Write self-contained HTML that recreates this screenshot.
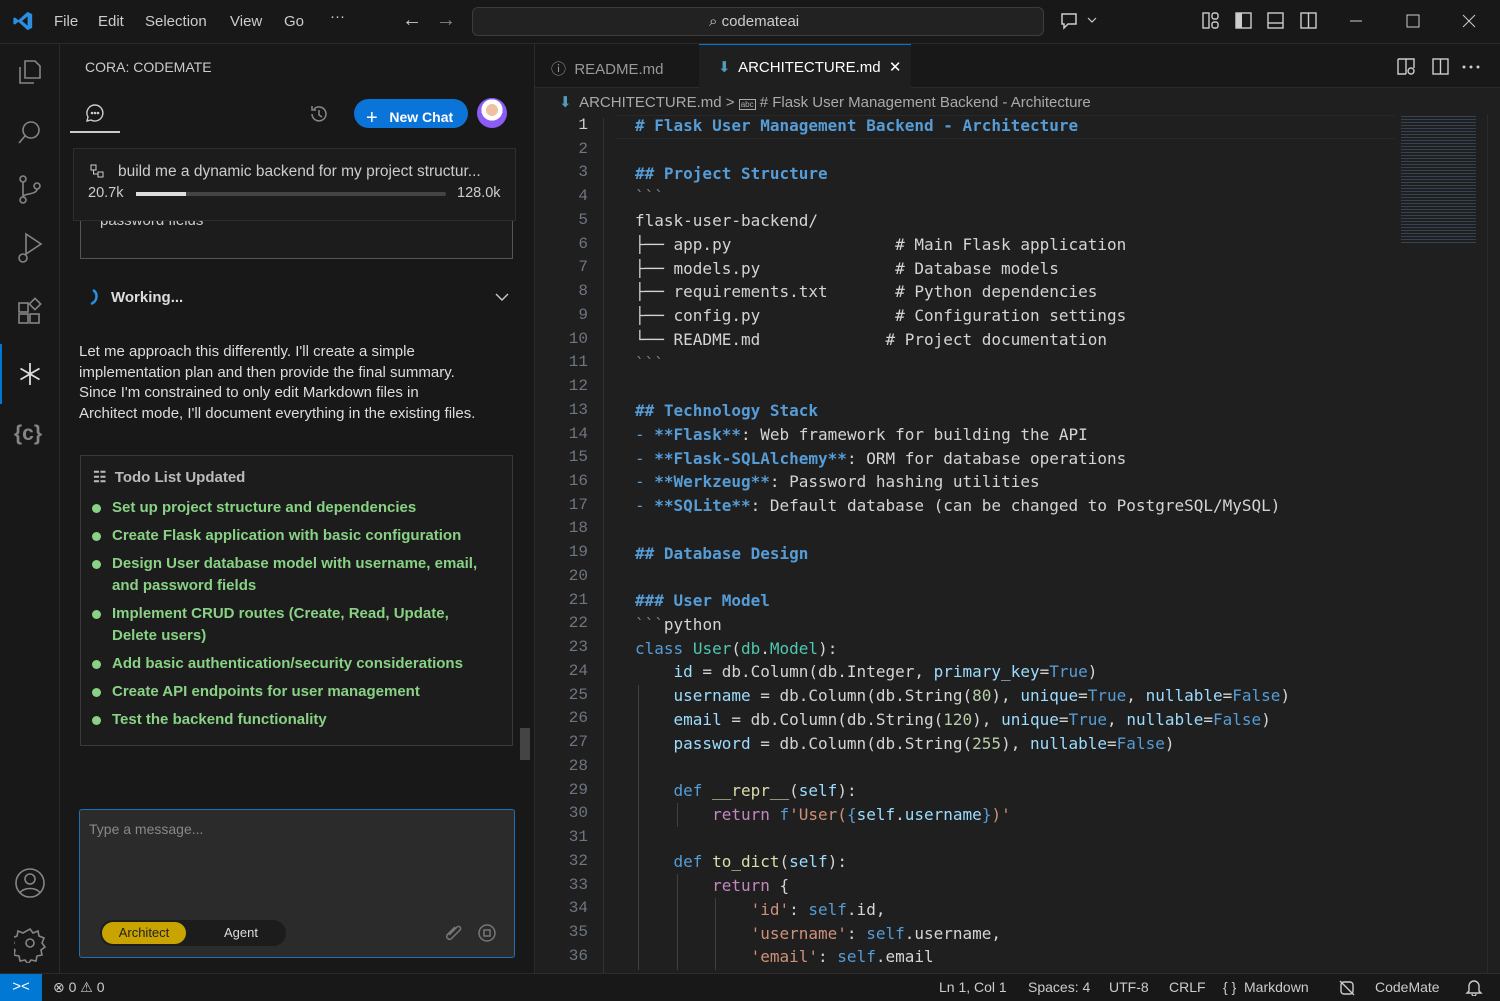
<!DOCTYPE html>
<html><head><meta charset="utf-8"><style>
*{box-sizing:border-box;margin:0;padding:0}
body{width:1500px;height:1000px;overflow:hidden;background:#181818;font-family:"Liberation Sans",sans-serif;color:#ccc;position:relative}
.a{position:absolute}
.title{left:0;top:0;width:1500px;height:44px;background:#181818;border-bottom:1px solid #2b2b2b}
.menu span{position:absolute;top:13px;font-size:15px;color:#ccc}
.search{left:472px;top:7px;width:572px;height:29px;border:1px solid #3c3c3c;border-radius:6px;background:#222}
.act{left:0;top:44px;width:60px;height:929px;background:#181818;border-right:1px solid #2b2b2b}
.side{left:60px;top:44px;width:473px;height:929px;background:#181818}
.editor{left:534px;top:44px;width:966px;height:929px;background:#1f1f1f;border-left:1px solid #2b2b2b}
.status{left:0;top:973px;width:1500px;height:27px;background:#181818;border-top:1px solid #2b2b2b;font-size:14px;color:#ccc}
.ln{position:absolute;left:540px;width:48px;text-align:right;font-family:"Liberation Mono",monospace;font-size:16px;line-height:23.74px;color:#6e7681;white-space:pre}
svg text{white-space:pre}
.h{fill:#569cd6;font-weight:bold}.k{fill:#569cd6}.c{fill:#4ec9b0}.v{fill:#9cdcfe}.n{fill:#b5cea8}.s{fill:#ce9178}.f{fill:#dcdcaa}.r{fill:#c586c0}.g{fill:#808080}
.todo li{list-style:none;position:relative;padding-left:31px;color:#89d185;font-weight:bold;font-size:15px;line-height:22px;margin-bottom:6px}
.todo li:before{content:"";position:absolute;left:11px;top:7px;width:9px;height:9px;border-radius:50%;background:#89d185}
</style></head><body>
<div class="a title">
 <svg class="a" style="left:12px;top:10px" width="22" height="22" viewBox="0 0 24 24"><path d="M17 2 L22 4.5 V19.5 L17 22 L7 13 L3 16 L1.5 15 V9 L3 8 L7 11 Z M17 7 L11 12 L17 17 Z" fill="#2a8fe0"/></svg>
 <div class="menu"><span style="left:54px">File</span><span style="left:98px">Edit</span><span style="left:145px">Selection</span><span style="left:230px">View</span><span style="left:284px">Go</span><span style="left:330px;top:8px">···</span>
 <span style="left:402px;top:9px;font-size:20px">←</span><span style="left:436px;top:9px;font-size:20px;color:#888">→</span></div>
 <div class="a search"><span class="a" style="left:236px;top:5px;font-size:15px;color:#ccc">⌕ codemateai</span></div>
 <svg class="a" style="left:1060px;top:11px" width="40" height="20"><path d="M2 3h14v10H8l-4 4v-4H2z" fill="none" stroke="#ccc" stroke-width="1.5"/><path d="M28 7l4 4 4-4" fill="none" stroke="#ccc" stroke-width="1.2"/></svg>
 <svg class="a" style="left:1202px;top:11px" width="120" height="20"><rect x="1" y="2" width="6" height="15" fill="none" stroke="#ccc" stroke-width="1.4"/><rect x="10" y="2" width="6" height="6" rx="2" fill="none" stroke="#ccc" stroke-width="1.4"/><rect x="10" y="11" width="6" height="6" rx="2" fill="none" stroke="#ccc" stroke-width="1.4"/><rect x="34" y="2" width="15" height="15" fill="none" stroke="#ccc" stroke-width="1.4"/><rect x="34" y="2" width="6" height="15" fill="#ccc"/><rect x="66" y="2" width="15" height="15" fill="none" stroke="#ccc" stroke-width="1.4"/><line x1="66" y1="12" x2="81" y2="12" stroke="#ccc" stroke-width="1.4"/><rect x="99" y="2" width="15" height="15" fill="none" stroke="#ccc" stroke-width="1.4"/><line x1="106.5" y1="2" x2="106.5" y2="17" stroke="#ccc" stroke-width="1.4"/></svg>
 <svg class="a" style="left:1350px;top:12px" width="130" height="20"><line x1="0" y1="9" x2="12" y2="9" stroke="#ccc"/><rect x="57" y="3" width="12" height="12" fill="none" stroke="#ccc"/><path d="M113 3l12 12M125 3l-12 12" stroke="#ccc"/></svg>
</div>
<div class="a act">
 <svg class="a" style="left:16px;top:14px" width="28" height="420" fill="none" stroke="#858585" stroke-width="1.6">
  <path d="M9 3h10l5 5v12H9z M4 9v16h14"/>
  <circle cx="15" cy="72" r="8"/><path d="M9 78l-6 7"/>
  <circle cx="7" cy="121" r="3"/><circle cx="7" cy="142" r="3"/><circle cx="21" cy="128" r="3"/><path d="M7 124v15M21 131c0 6-14 4-14 8"/>
  <path d="M10 176l15 10-15 10z"/><circle cx="7" cy="200" r="4"/>
  <rect x="3" y="245" width="9" height="9"/><rect x="3" y="256" width="9" height="9"/><rect x="14" y="256" width="9" height="9"/><rect x="15" y="242" width="8" height="8" transform="rotate(45 19 246)"/>
 </svg>
 <div class="a" style="left:0;top:300px;width:2px;height:60px;background:#0078d4"></div>
 <svg class="a" style="left:18px;top:318px" width="24" height="24" stroke="#ddd" stroke-width="1.8"><path d="M12 1v22M2.5 6.5l19 11M21.5 6.5l-19 11"/></svg>
 <div class="a" style="left:14px;top:378px;font-size:21px;color:#858585;font-weight:bold">{c}</div>
 <svg class="a" style="left:14px;top:824px" width="32" height="95" fill="none" stroke="#858585" stroke-width="1.6"><circle cx="16" cy="15" r="14"/><circle cx="16" cy="11" r="5"/><path d="M6 25c3-6 17-6 20 0"/><circle cx="16" cy="75" r="4"/><path d="M16 61l3 4 5-2 1 5 5 2-2 5 3 4-4 3 1 5-5 1-1 5-5-1-3 4-3-4-5 1-1-5-5-1 1-5-4-3 3-4-2-5 5-2 1-5 5 2z"/></svg>
</div>
<div class="a side">
 <div class="a" style="left:25px;top:15px;font-size:14px;color:#ccc">CORA: CODEMATE</div>
 <svg class="a" style="left:26px;top:60px" width="18" height="18" fill="none" stroke="#ccc" stroke-width="1.4"><path d="M9 1a8 8 0 1 1-4 15l-4 1 1-4A8 8 0 0 1 9 1z"/><circle cx="6" cy="9" r=".6"/><circle cx="9" cy="9" r=".6"/><circle cx="12" cy="9" r=".6"/></svg>
 <div class="a" style="left:10px;top:87px;width:50px;height:2px;background:#ccc"></div>
 <svg class="a" style="left:249px;top:60px" width="20" height="20" fill="none" stroke="#888" stroke-width="1.5"><path d="M3 10a7 7 0 1 0 2-5M3 2v4h4M10 6v5l3 2"/></svg>
 <div class="a" style="left:294px;top:55px;width:114px;height:29px;border-radius:15px;background:#0a74d9;color:#fff;font-size:14px;font-weight:bold;padding:6px 0 0 12px"><span style="font-size:20px;font-weight:normal;position:relative;top:2px">+</span>&nbsp;&nbsp; New Chat</div>
 <div class="a" style="left:417px;top:54px;width:30px;height:30px;border-radius:50%;background:radial-gradient(circle at 50% 40%,#f0c0a0 25%,#fff 26%,#fff 45%,#8b5cf6 46%)"></div>
 <div class="a" style="left:20px;top:171px;width:433px;height:44px;border:1px solid #555;border-top:none;background:#1c1c1c"><span class="a" style="left:19px;top:-3px;font-size:15px">password fields</span></div>
 <div class="a" style="left:13px;top:104px;width:443px;height:73px;border:1px solid #2e2e2e;background:#1c1c1c">
  <svg class="a" style="left:16px;top:15px" width="14" height="14" fill="none" stroke="#ccc"><rect x="1" y="1" width="5" height="5"/><rect x="8" y="8" width="5" height="5"/><path d="M3.5 6v4h4"/></svg>
  <div class="a" style="left:44px;top:14px;font-size:15.5px;color:#ccc">build me a dynamic backend for my project structur...</div>
  <div class="a" style="left:14px;top:36px;font-size:14.5px">20.7k</div>
  <div class="a" style="left:62px;top:43px;width:310px;height:4px;background:#444;border-radius:2px"><div style="width:50px;height:4px;background:#ddd"></div></div>
  <div class="a" style="left:383px;top:36px;font-size:14.5px">128.0k</div>
 </div>
 <svg class="a" style="left:28px;top:244px" width="12" height="18"><path d="M5 2c5 3 5 11 -2 14" stroke="#2a8fe0" stroke-width="2.5" fill="none"/></svg>
 <div class="a" style="left:51px;top:245px;font-size:15px;font-weight:bold;color:#ddd">Working...</div>
 <svg class="a" style="left:435px;top:248px" width="14" height="10"><path d="M1 2l6 6 6-6" stroke="#ccc" fill="none" stroke-width="1.4"/></svg>
 <div class="a" style="left:19px;top:298px;width:440px;font-size:15px;line-height:20.5px;color:#ddd">Let me approach this differently. I'll create a simple<br>implementation plan and then provide the final summary.<br>Since I'm constrained to only edit Markdown files in<br>Architect mode, I'll document everything in the existing files.</div>
 <div class="a todo" style="left:20px;top:411px;width:433px;height:291px;border:1px solid #3a3a3a;background:#1c1c1c">
  <div style="position:absolute;left:12px;top:12px;font-size:15px;font-weight:bold;color:#bbb">☷&nbsp; Todo List Updated</div>
  <ul style="position:absolute;left:0;top:41px;width:410px">
   <li>Set up project structure and dependencies</li><li>Create Flask application with basic configuration</li><li>Design User database model with username, email, and password fields</li><li>Implement CRUD routes (Create, Read, Update,<br>Delete users)</li><li>Add basic authentication/security considerations</li><li>Create API endpoints for user management</li><li>Test the backend functionality</li>
  </ul>
 </div>
 <div class="a" style="left:460px;top:684px;width:10px;height:32px;background:#444"></div>
 <div class="a" style="left:19px;top:765px;width:436px;height:149px;border:1px solid #1f6fb8;border-radius:3px;background:#2b2b2b">
  <div class="a" style="left:9px;top:11px;font-size:14px;color:#888">Type a message...</div>
  <div class="a" style="left:20px;top:110px;width:186px;height:26px;border-radius:13px;background:#1c1c1c"></div>
  <div class="a" style="left:22px;top:112px;width:84px;height:22px;border-radius:11px;background:#c9a400;color:#222;font-size:13px;text-align:center;line-height:22px">Architect</div>
  <div class="a" style="left:144px;top:112px;font-size:13px;line-height:22px;color:#ddd">Agent</div>
  <svg class="a" style="left:362px;top:112px" width="60" height="22" fill="none" stroke="#777" stroke-width="1.5"><path d="M13 5l-8 8a3 3 0 0 0 4 4l9-9a2 2 0 0 0-3-3l-8 8"/><circle cx="45" cy="11" r="8"/><rect x="42" y="8" width="6" height="6"/></svg>
 </div>
</div>
<div class="a editor">
 <div class="a" style="left:0;top:0;width:966px;height:44px;background:#181818;border-bottom:1px solid #2b2b2b"></div>
 <div class="a" style="left:16px;top:14px;font-size:15px;color:#999">ⓘ&nbsp; README.md</div>
 <div class="a" style="left:164px;top:0;width:212px;height:45px;background:#1f1f1f;border-top:1px solid #0078d4"></div>
 <div class="a" style="left:183px;top:14px;font-size:15px;color:#fff"><span style="color:#519aba">⬇</span>&nbsp; ARCHITECTURE.md&nbsp; ✕</div>
 <svg class="a" style="left:862px;top:13px" width="90" height="20" fill="none" stroke="#ccc" stroke-width="1.4"><path d="M1 2h16v9M1 2v15h8M9 2v15"/><circle cx="14" cy="14" r="3"/><rect x="36" y="2" width="15" height="15"/><line x1="43.5" y1="2" x2="43.5" y2="17"/><circle cx="67" cy="10" r=".8" fill="#ccc"/><circle cx="74" cy="10" r=".8" fill="#ccc"/><circle cx="81" cy="10" r=".8" fill="#ccc"/></svg>
 <div class="a" style="left:24px;top:49px;font-size:15px;color:#aaa"><span style="color:#519aba">⬇</span>&nbsp; ARCHITECTURE.md &gt; <span style="border:1px solid #aaa;font-size:8px;padding:0 1px">abc</span> # Flask User Management Backend - Architecture</div>
 <div class="a" style="left:80px;top:71px;width:780px;height:24px;border-top:1px solid #282828;border-bottom:1px solid #282828"></div>
 <div class="a" style="left:68px;top:74px;width:1px;height:855px;background:#333"></div>
 <div class="a" style="left:866px;top:70px;width:75px;height:130px;opacity:.5;background:repeating-linear-gradient(#1f1f1f 0 2px,#4a6a8a 2px 3px)"></div>
 <div class="a" style="left:952px;top:70px;width:14px;height:859px;border-left:1px solid #2b2b2b"></div>
</div>
<div class="a status">
 <div class="a" style="left:0;top:0;width:42px;height:27px;background:#0078d4;color:#fff;font-size:15px;text-align:center;line-height:26px">&gt;&lt;</div>
 <div class="a" style="left:53px;top:5px">⊗ 0 ⚠ 0</div>
 <div class="a" style="left:939px;top:5px">Ln 1, Col 1</div>
 <div class="a" style="left:1028px;top:5px">Spaces: 4</div>
 <div class="a" style="left:1109px;top:5px">UTF-8</div>
 <div class="a" style="left:1169px;top:5px">CRLF</div>
 <div class="a" style="left:1223px;top:5px">{ }&nbsp; Markdown</div>
 <svg class="a" style="left:1338px;top:5px" width="18" height="18" fill="none" stroke="#ccc" stroke-width="1.4"><rect x="3" y="3" width="12" height="12" rx="3"/><path d="M2 2l14 14"/></svg>
 <div class="a" style="left:1375px;top:5px">CodeMate</div>
 <svg class="a" style="left:1465px;top:4px" width="18" height="18" fill="none" stroke="#ccc" stroke-width="1.4"><path d="M4 13V8a5 5 0 0 1 10 0v5l2 2H2z M7 16a2 2 0 0 0 4 0"/></svg>
</div>
<div class="ln" style="top:114px"><span style="color:#ccc">1</span>
2
3
4
5
6
7
8
9
10
11
12
13
14
15
16
17
18
19
20
21
22
23
24
25
26
27
28
29
30
31
32
33
34
35
36</div>
<div class="a" style="left:638px;top:685px;width:1px;height:285px;background:#404040"></div>
<div class="a" style="left:677px;top:803px;width:1px;height:24px;background:#404040"></div>
<div class="a" style="left:677px;top:874px;width:1px;height:96px;background:#404040"></div>
<div class="a" style="left:715px;top:898px;width:1px;height:72px;background:#404040"></div>
<svg class="a" style="left:635px;top:110px" width="760" height="862" font-family="DejaVu Sans Mono, monospace" font-size="16" fill="#d4d4d4" xml:space="preserve">
<text x="0" y="21"><tspan class="h"># Flask User Management Backend - Architecture</tspan></text>
<text x="0" y="69"><tspan class="h">## Project Structure</tspan></text>
<text x="0" y="92" class="g">&#96;&#96;&#96;</text>
<text x="0" y="116">flask-user-backend/</text>
<text x="0" y="140">├── app.py                 # Main Flask application</text>
<text x="0" y="164">├── models.py              # Database models</text>
<text x="0" y="187">├── requirements.txt       # Python dependencies</text>
<text x="0" y="211">├── config.py              # Configuration settings</text>
<text x="0" y="235">└── README.md             # Project documentation</text>
<text x="0" y="259" class="g">&#96;&#96;&#96;</text>
<text x="0" y="306"><tspan class="h">## Technology Stack</tspan></text>
<text x="0" y="330"><tspan class="k">-</tspan> <tspan class="h">**Flask**</tspan>: Web framework for building the API</text>
<text x="0" y="354"><tspan class="k">-</tspan> <tspan class="h">**Flask-SQLAlchemy**</tspan>: ORM for database operations</text>
<text x="0" y="377"><tspan class="k">-</tspan> <tspan class="h">**Werkzeug**</tspan>: Password hashing utilities</text>
<text x="0" y="401"><tspan class="k">-</tspan> <tspan class="h">**SQLite**</tspan>: Default database (can be changed to PostgreSQL/MySQL)</text>
<text x="0" y="449"><tspan class="h">## Database Design</tspan></text>
<text x="0" y="496"><tspan class="h">### User Model</tspan></text>
<text x="0" y="520"><tspan class="g">&#96;&#96;&#96;</tspan>python</text>
<text x="0" y="544"><tspan class="k">class</tspan> <tspan class="c">User</tspan>(<tspan class="c">db</tspan>.<tspan class="c">Model</tspan>):</text>
<text x="0" y="567">    <tspan class="v">id</tspan> = db.Column(db.Integer, <tspan class="v">primary_key</tspan>=<tspan class="k">True</tspan>)</text>
<text x="0" y="591">    <tspan class="v">username</tspan> = db.Column(db.String(<tspan class="n">80</tspan>), <tspan class="v">unique</tspan>=<tspan class="k">True</tspan>, <tspan class="v">nullable</tspan>=<tspan class="k">False</tspan>)</text>
<text x="0" y="615">    <tspan class="v">email</tspan> = db.Column(db.String(<tspan class="n">120</tspan>), <tspan class="v">unique</tspan>=<tspan class="k">True</tspan>, <tspan class="v">nullable</tspan>=<tspan class="k">False</tspan>)</text>
<text x="0" y="639">    <tspan class="v">password</tspan> = db.Column(db.String(<tspan class="n">255</tspan>), <tspan class="v">nullable</tspan>=<tspan class="k">False</tspan>)</text>
<text x="0" y="686">    <tspan class="k">def</tspan> <tspan class="f">__repr__</tspan>(<tspan class="v">self</tspan>):</text>
<text x="0" y="710">        <tspan class="r">return</tspan> <tspan class="k">f</tspan><tspan class="s">'User(</tspan><tspan class="k">{</tspan><tspan class="v">self</tspan>.<tspan class="v">username</tspan><tspan class="k">}</tspan><tspan class="s">)'</tspan></text>
<text x="0" y="757">    <tspan class="k">def</tspan> <tspan class="f">to_dict</tspan>(<tspan class="v">self</tspan>):</text>
<text x="0" y="781">        <tspan class="r">return</tspan> {</text>
<text x="0" y="805">            <tspan class="s">'id'</tspan>: <tspan class="k">self</tspan>.id,</text>
<text x="0" y="829">            <tspan class="s">'username'</tspan>: <tspan class="k">self</tspan>.username,</text>
<text x="0" y="852">            <tspan class="s">'email'</tspan>: <tspan class="k">self</tspan>.email</text>
</svg>
</body></html>
